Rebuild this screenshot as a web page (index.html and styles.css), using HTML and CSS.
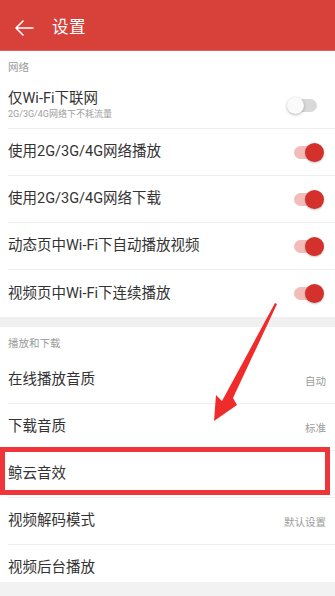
FILE: index.html
```html
<!DOCTYPE html>
<html lang="zh">
<head>
<meta charset="utf-8">
<title>设置</title>
<link rel="stylesheet" href="styles.css">
</head>
<body>
<div class="screen">
  <header class="topbar">
    <svg class="back" width="20" height="16" viewBox="0 0 20 16"><path d="M19 8H2M9 1L2 8l7 7" fill="none" stroke="#fff" stroke-width="1.6" stroke-linecap="round" stroke-linejoin="round"/></svg>
    <span class="title">设置</span>
  </header>

  <div class="section-label">网络</div>
  <div class="row row-tall">
    <div class="texts">
      <div class="name">仅Wi-Fi下联网</div>
      <div class="sub">2G/3G/4G网络下不耗流量</div>
    </div>
    <span class="toggle off"><span class="track"></span><span class="knob"></span></span>
  </div>
  <div class="row">
    <div class="name">使用2G/3G/4G网络播放</div>
    <span class="toggle on"><span class="track"></span><span class="knob"></span></span>
  </div>
  <div class="row">
    <div class="name">使用2G/3G/4G网络下载</div>
    <span class="toggle on"><span class="track"></span><span class="knob"></span></span>
  </div>
  <div class="row">
    <div class="name">动态页中Wi-Fi下自动播放视频</div>
    <span class="toggle on"><span class="track"></span><span class="knob"></span></span>
  </div>
  <div class="row last">
    <div class="name">视频页中Wi-Fi下连续播放</div>
    <span class="toggle on"><span class="track"></span><span class="knob"></span></span>
  </div>
  <div class="gap"></div>

  <div class="section-label">播放和下载</div>
  <div class="row">
    <div class="name">在线播放音质</div>
    <span class="value">自动</span>
  </div>
  <div class="row">
    <div class="name">下载音质</div>
    <span class="value">标准</span>
  </div>
  <div class="row">
    <div class="name">鲸云音效</div>
  </div>
  <div class="row">
    <div class="name">视频解码模式</div>
    <span class="value">默认设置</span>
  </div>
  <div class="row row-short last">
    <div class="name">视频后台播放</div>
  </div>
  <div class="footer"></div>

  <div class="highlight"></div>
  <svg class="pointer" width="335" height="596" viewBox="0 0 335 596">
    <path d="M277 304 L233 398 L237 405 L214 421 L216 395 L222 401 L275 303 Z" fill="#ef2b2b"/>
  </svg>
</div>
</body>
</html>
```
FILE: styles.css
```css
* { box-sizing: border-box; }
html, body { margin: 0; padding: 0; }
body {
  width: 335px;
  height: 596px;
  overflow: hidden;
  background: #fff;
  font-family: Roboto, "Noto Sans CJK SC", sans-serif;
  color: #333;
}
.screen {
  position: relative;
  width: 335px;
  height: 596px;
  display: flex;
  flex-direction: column;
}
.topbar {
  height: 51px;
  flex: none;
  background: #d7413a;
  display: flex;
  align-items: center;
  padding-top: 5px;
  border-bottom: 1px solid #e0605a;
}
.back { margin-left: 14px; }
.title {
  margin-left: 18px;
  color: #fff;
  font-size: 16.5px;
  line-height: 20px;
  letter-spacing: 0.5px;
}
.section-label {
  height: 30px;
  flex: none;
  padding: 10px 0 0 8px;
  font-size: 10.5px;
  line-height: 14px;
  color: #9a9a9a;
}
.row {
  height: 47px;
  flex: none;
  margin-left: 8px;
  padding-right: 9px;
  display: flex;
  align-items: center;
  justify-content: space-between;
  border-bottom: 1px solid #efefef;
}
.row.last { border-bottom: none; }
.row-tall { height: 48px; padding-top: 1px; }
.row-short { height: 37px; align-items: flex-start; padding-top: 13px; }
.name {
  font-size: 14.5px;
  line-height: 20px;
  color: #333;
}
.texts { display: flex; flex-direction: column; }
.texts .name { line-height: 18px; }
.sub {
  font-size: 9px;
  line-height: 13px;
  color: #a0a0a0;
}
.value {
  font-size: 10.5px;
  color: #9a9a9a;
}
.gap {
  height: 10px;
  flex: none;
  background: #f0f0f0;
}
.footer {
  flex: 1;
  background: #f2f2f2;
}
.toggle {
  position: relative;
  width: 30px;
  height: 19px;
  flex: none;
}
.toggle .track {
  position: absolute;
  left: 0;
  right: 1px;
  top: 3px;
  height: 13px;
  border-radius: 7px;
}
.toggle .knob {
  position: absolute;
  top: 0;
  width: 19px;
  height: 19px;
  border-radius: 50%;
}
.toggle.on { margin-right: 2px; }
.toggle.on .track { background: #f2bdb9; }
.toggle.on .knob {
  right: 0;
  background: #d4302c;
  box-shadow: 0 1px 2px rgba(0,0,0,0.25);
}
.toggle.off { margin-right: 9px; }
.toggle.off .track { background: #d9d9d9; left: 4px; right: 0; }
.toggle.off .knob {
  left: 0;
  width: 17px;
  height: 17px;
  top: 1px;
  background: #fafafa;
  box-shadow: 0 1px 3px rgba(0,0,0,0.3);
}
.highlight {
  position: absolute;
  left: 0;
  top: 447px;
  width: 330px;
  height: 48px;
  border: 5px solid #f0353a;
}
.pointer {
  position: absolute;
  left: 0;
  top: 0;
  pointer-events: none;
}
```
